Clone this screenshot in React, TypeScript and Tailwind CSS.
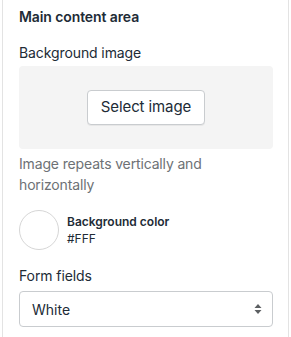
import React from 'react'

const App = () => {
  return (
    <div className="w-[291px] h-[337px] bg-white overflow-hidden font-['Inter',sans-serif] text-[#212b36]">
      <div className="ml-[2px] w-[287px] h-full border-x border-[#e3e3e3] pl-[16px] pr-[15px] pt-[7px]">
        <h2 className="text-[14px] font-semibold leading-[20px] tracking-[-0.1px]">Main content area</h2>

        <div className="mt-[16px]">
          <p className="text-[14px] leading-[20px] tracking-[-0.1px]">Background image</p>
          <div className="mt-[3px] h-[83px] rounded-[4px] bg-[#f4f4f4] flex items-center justify-center">
            <button className="h-[35px] w-[118px] rounded-[4px] border border-[#c9cccf] bg-white text-[15px] tracking-[-0.1px] shadow-[0_1px_0_rgba(0,0,0,0.05)]">
              Select image
            </button>
          </div>
          <p className="mt-[4px] text-[14px] leading-[21px] tracking-[-0.15px] text-[#6d7175]">
            Image repeats vertically and horizontally
          </p>
        </div>

        <div className="mt-[15px] flex items-center gap-[8px]">
          <div className="w-[40px] h-[40px] rounded-full border border-[#d6d6d6] bg-white" />
          <div className="leading-[17px]">
            <p className="text-[12px] font-semibold">Background color</p>
            <p className="text-[12px]">#FFF</p>
          </div>
        </div>

        <div className="mt-[16px]">
          <p className="text-[14px] leading-[20px] tracking-[-0.1px]">Form fields</p>
          <div className="mt-[5px] h-[36px] rounded-[4px] border border-[#c9cccf] bg-white flex items-center justify-between pl-[12px] pr-[10px]">
            <span className="text-[14px]">White</span>
            <svg width="8" height="12" viewBox="0 0 8 12" fill="#5c5f62">
              <path d="M4 1 L7.5 5 H0.5 Z" />
              <path d="M4 11 L0.5 7 H7.5 Z" />
            </svg>
          </div>
        </div>
      </div>
    </div>
  )
}

export default App
